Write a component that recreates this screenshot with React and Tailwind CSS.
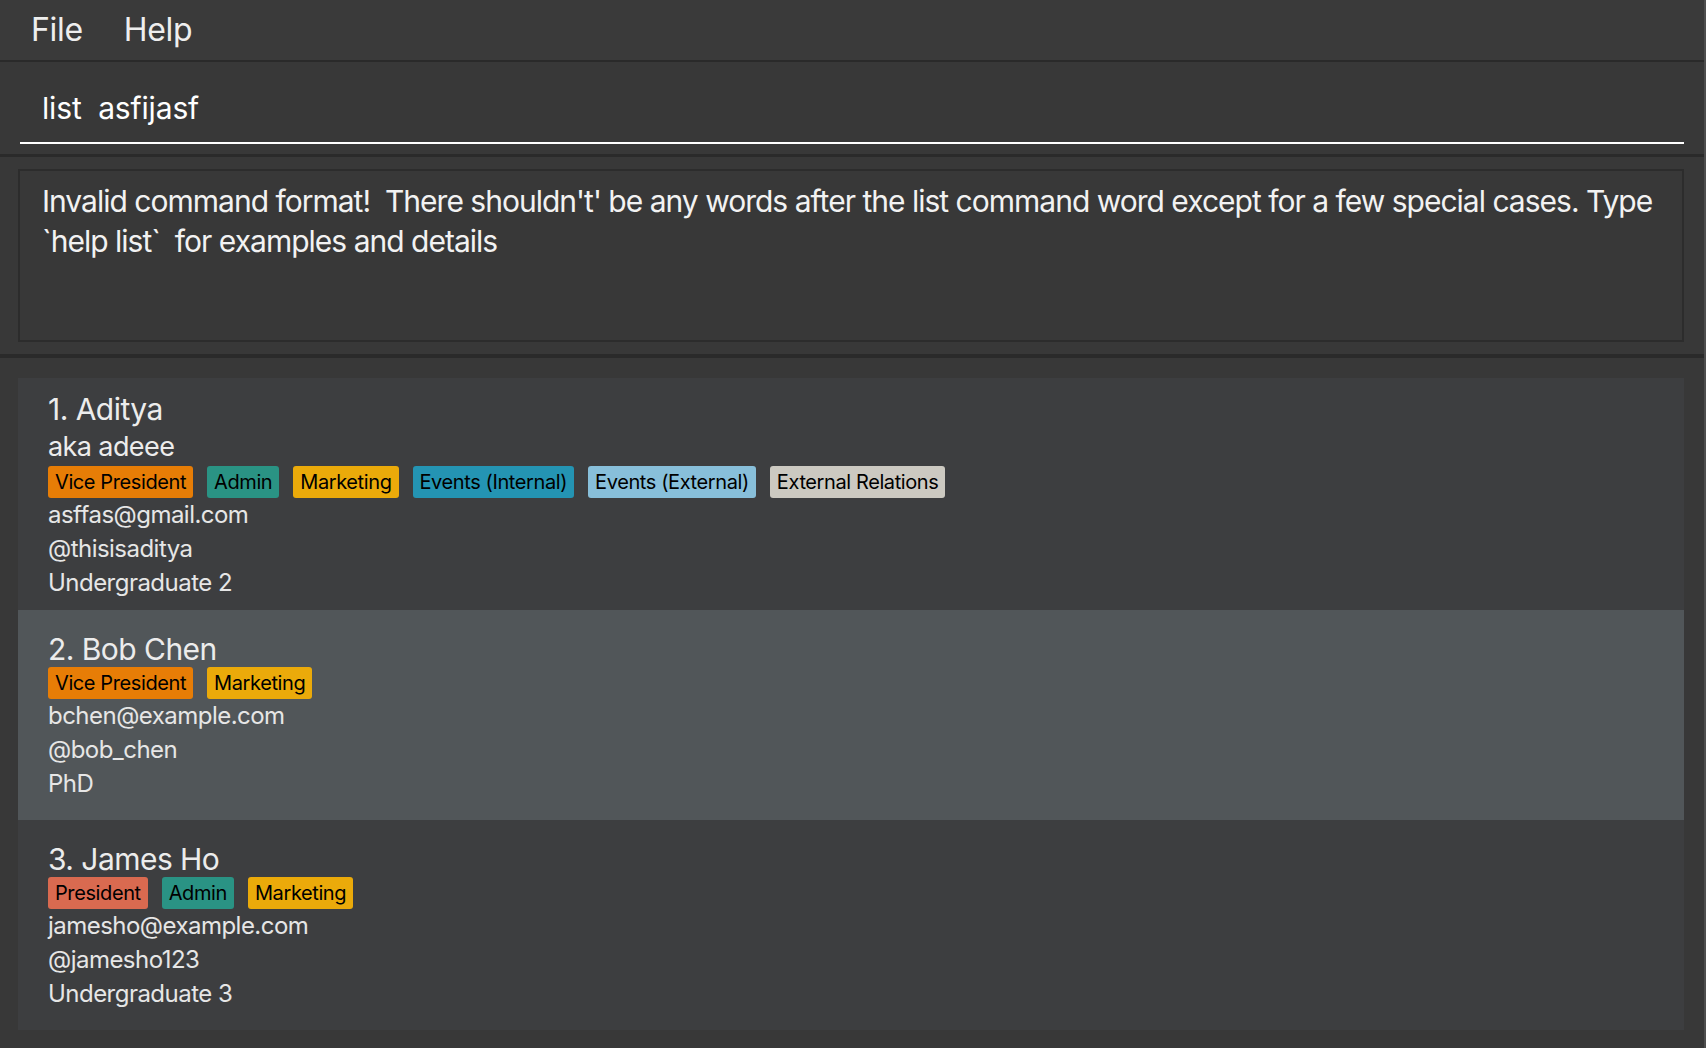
import React from 'react';

const TAG_COLORS = {
  'President': 'bg-[#d96a50]',
  'Vice President': 'bg-[#e77d06]',
  'Admin': 'bg-[#2a9384]',
  'Marketing': 'bg-[#ebaa0a]',
  'Events (Internal)': 'bg-[#2494b3]',
  'Events (External)': 'bg-[#88bfda]',
  'External Relations': 'bg-[#ccc9c1]',
};

const people = [
  {
    id: 1,
    name: 'Aditya',
    nickname: 'adeee',
    tags: ['Vice President', 'Admin', 'Marketing', 'Events (Internal)', 'Events (External)', 'External Relations'],
    email: 'asffas@gmail.com',
    telegram: '@thisisaditya',
    year: 'Undergraduate 2',
  },
  {
    id: 2,
    name: 'Bob Chen',
    tags: ['Vice President', 'Marketing'],
    email: 'bchen@example.com',
    telegram: '@bob_chen',
    year: 'PhD',
    selected: true,
  },
  {
    id: 3,
    name: 'James Ho',
    tags: ['President', 'Admin', 'Marketing'],
    email: 'jamesho@example.com',
    telegram: '@jamesho123',
    year: 'Undergraduate 3',
  },
];

const Tag = ({ label }) => (
  <span className={`flex h-[32px] items-center rounded-[3px] px-[7px] text-[20px] leading-[24px] tracking-[-0.02em] text-black ${TAG_COLORS[label]}`}>
    {label}
  </span>
);

const PersonCard = ({ person, index }) => (
  <div
    className={`pl-[30px] ${person.selected ? 'bg-[#515659]' : 'bg-[#3d3e40]'} ${
      person.nickname ? 'pt-[13px] pb-[10px]' : 'pt-[21px] pb-[19px]'
    }`}
  >
    <div className="text-[30px] leading-[36px] tracking-[-0.018em] text-[#ececec]">
      {index + 1}. {person.name}
    </div>
    {person.nickname && (
      <div className="text-[27px] leading-[39px] tracking-[-0.022em] text-[#ececec]">aka {person.nickname}</div>
    )}
    <div className="flex gap-[14px]">
      {person.tags.map((t) => (
        <Tag key={t} label={t} />
      ))}
    </div>
    <div className="text-[24px] leading-[34px] tracking-[-0.022em] text-[#e6e6e6]">
      <div>{person.email}</div>
      <div>{person.telegram}</div>
      <div>{person.year}</div>
    </div>
  </div>
);

export default function App() {
  return (
    <div className="flex h-[1048px] w-full overflow-hidden bg-[#383838] font-['Inter','Noto_Sans',sans-serif]">
      <div className="flex min-w-0 flex-1 flex-col">
        {/* Menu bar */}
        <div className="flex h-[60px] items-center gap-[41px] bg-[#3a3a3a] pl-[31px] text-[32px] leading-[60px] tracking-[-0.01em] text-[#eeeeee]">
          <span>File</span>
          <span>Help</span>
        </div>
        <div className="h-[2px] bg-[#2a2a2a]" />

        {/* Command box */}
        <div className="bg-[#383838] px-[20px] pt-[28px] pb-[10px]">
          <div className="border-b-2 border-white pb-[16px] pl-[22px] text-[30px] leading-[36px] tracking-[-0.005em] whitespace-pre text-white">
            list  asfijasf
          </div>
        </div>
        <div className="h-[3px] bg-[#2a2a2a]" />

        {/* Result display */}
        <div className="bg-[#383838] pt-[12px] pb-[12px] pl-[18px] pr-[20px]">
          <div className="h-[173px] overflow-hidden border-2 border-[#2c2c2c] bg-[#383838] pt-[10px] pl-[22px] pr-[8px] text-[30px] leading-[40px] tracking-[-0.033em] whitespace-pre-wrap text-[#f2f2f2]">
            Invalid command format!  There shouldn't' be any words after the list command word except for a few special cases. Type
            <br />
            `help list`  for examples and details
          </div>
        </div>
        <div className="h-[4px] bg-[#2a2a2a]" />

        {/* Person list */}
        <div className="flex-1 bg-[#383838] pt-[20px] pl-[18px] pr-[20px]">
          {people.map((p, i) => (
            <PersonCard key={p.id} person={p} index={i} />
          ))}
        </div>
      </div>
      <div className="w-[2px] bg-[#4e4e4e]" />
    </div>
  );
}
